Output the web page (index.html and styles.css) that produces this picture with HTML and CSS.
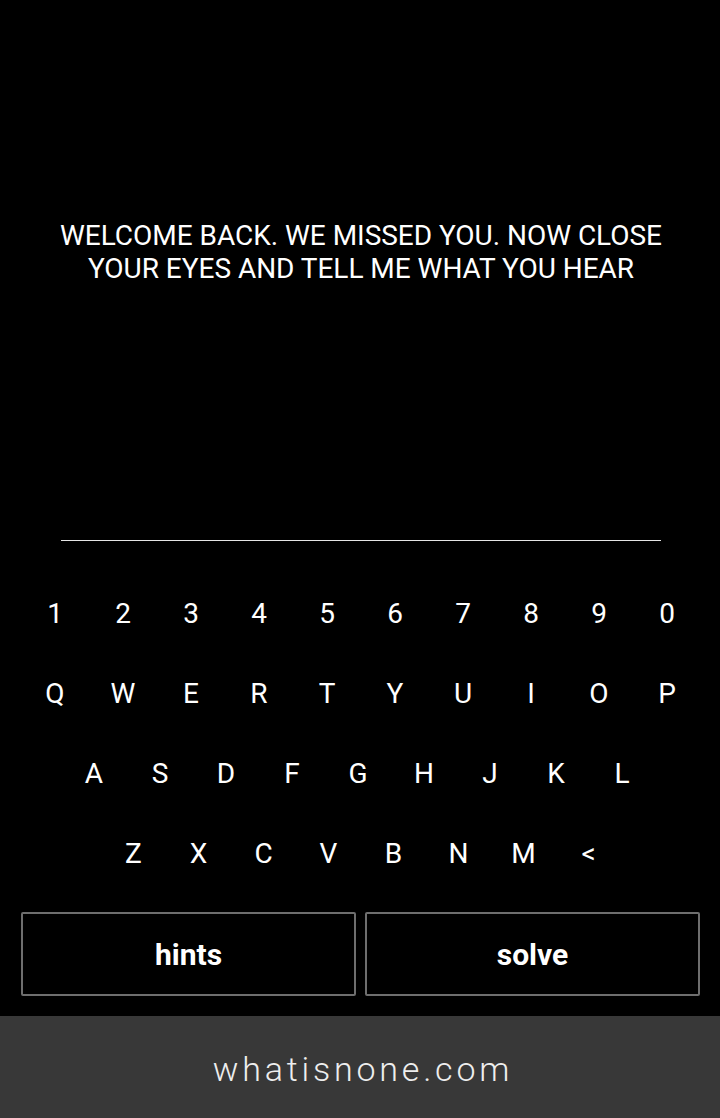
FILE: index.html
```html
<!DOCTYPE html>
<html>
<head>
<meta charset="utf-8">
<link rel="stylesheet" href="styles.css">
</head>
<body>
<div class="app">
  <main class="game">
    <p class="riddle">WELCOME BACK. WE MISSED YOU. NOW CLOSE<br>YOUR EYES AND TELL ME WHAT YOU HEAR</p>
    <div class="answer"></div>
    <div class="keyboard">
      <div class="row row1">
        <span class="key">1</span><span class="key">2</span><span class="key">3</span><span class="key">4</span><span class="key">5</span><span class="key">6</span><span class="key">7</span><span class="key">8</span><span class="key">9</span><span class="key">0</span>
      </div>
      <div class="row row1">
        <span class="key">Q</span><span class="key">W</span><span class="key">E</span><span class="key">R</span><span class="key">T</span><span class="key">Y</span><span class="key">U</span><span class="key">I</span><span class="key">O</span><span class="key">P</span>
      </div>
      <div class="row row2">
        <span class="key">A</span><span class="key">S</span><span class="key">D</span><span class="key">F</span><span class="key">G</span><span class="key">H</span><span class="key">J</span><span class="key">K</span><span class="key">L</span>
      </div>
      <div class="row row3">
        <span class="key">Z</span><span class="key">X</span><span class="key">C</span><span class="key">V</span><span class="key">B</span><span class="key">N</span><span class="key">M</span><span class="key">&lt;</span>
      </div>
    </div>
    <div class="actions">
      <button class="btn">hints</button>
      <button class="btn">solve</button>
    </div>
  </main>
  <footer class="footer">whatisnone.com</footer>
</div>
</body>
</html>
```

FILE: styles.css
```css
html, body {
  margin: 0;
  padding: 0;
  background: #000;
}
body {
  font-family: Roboto, "Noto Sans", sans-serif;
  color: #fff;
}
.app {
  width: 720px;
  height: 1118px;
  display: flex;
  flex-direction: column;
}
.game {
  flex: 1;
  display: flex;
  flex-direction: column;
}
.riddle {
  margin: 219px 0 0;
  padding-left: 2px;
  text-align: center;
  font-size: 28px;
  line-height: 33px;
  letter-spacing: -0.03px;
}
.answer {
  margin: 255px 59px 0 61px;
  height: 1px;
  background: #e6e6e6;
}
.keyboard {
  margin-top: 33px;
  padding-left: 2px;
  display: flex;
  flex-direction: column;
}
.row {
  display: flex;
  justify-content: center;
  height: 80px;
  align-items: center;
}
.key {
  text-align: center;
  font-size: 28px;
  line-height: 80px;
}
.row1 .key { width: 68px; }
.row2 { padding-right: 6px; }
.row2 .key { width: 66px; }
.row3 .key { width: 65px; }
.actions {
  margin-top: 18px;
  padding: 0 20px 0 21px;
  display: flex;
  gap: 9px;
}
.btn {
  flex: 1;
  height: 84px;
  background: #000;
  border: 2px solid #6e6e6e;
  border-radius: 2px;
  color: #fff;
  font-family: Roboto, "Noto Sans", sans-serif;
  font-weight: bold;
  font-size: 30px;
  padding: 0;
}
.footer {
  height: 102px;
  background: #383838;
  color: #eee;
  display: flex;
  align-items: center;
  justify-content: center;
  padding: 4px 0 0 6px;
  box-sizing: border-box;
  font-size: 34px;
  font-weight: 300;
  letter-spacing: 3.8px;
}
```
